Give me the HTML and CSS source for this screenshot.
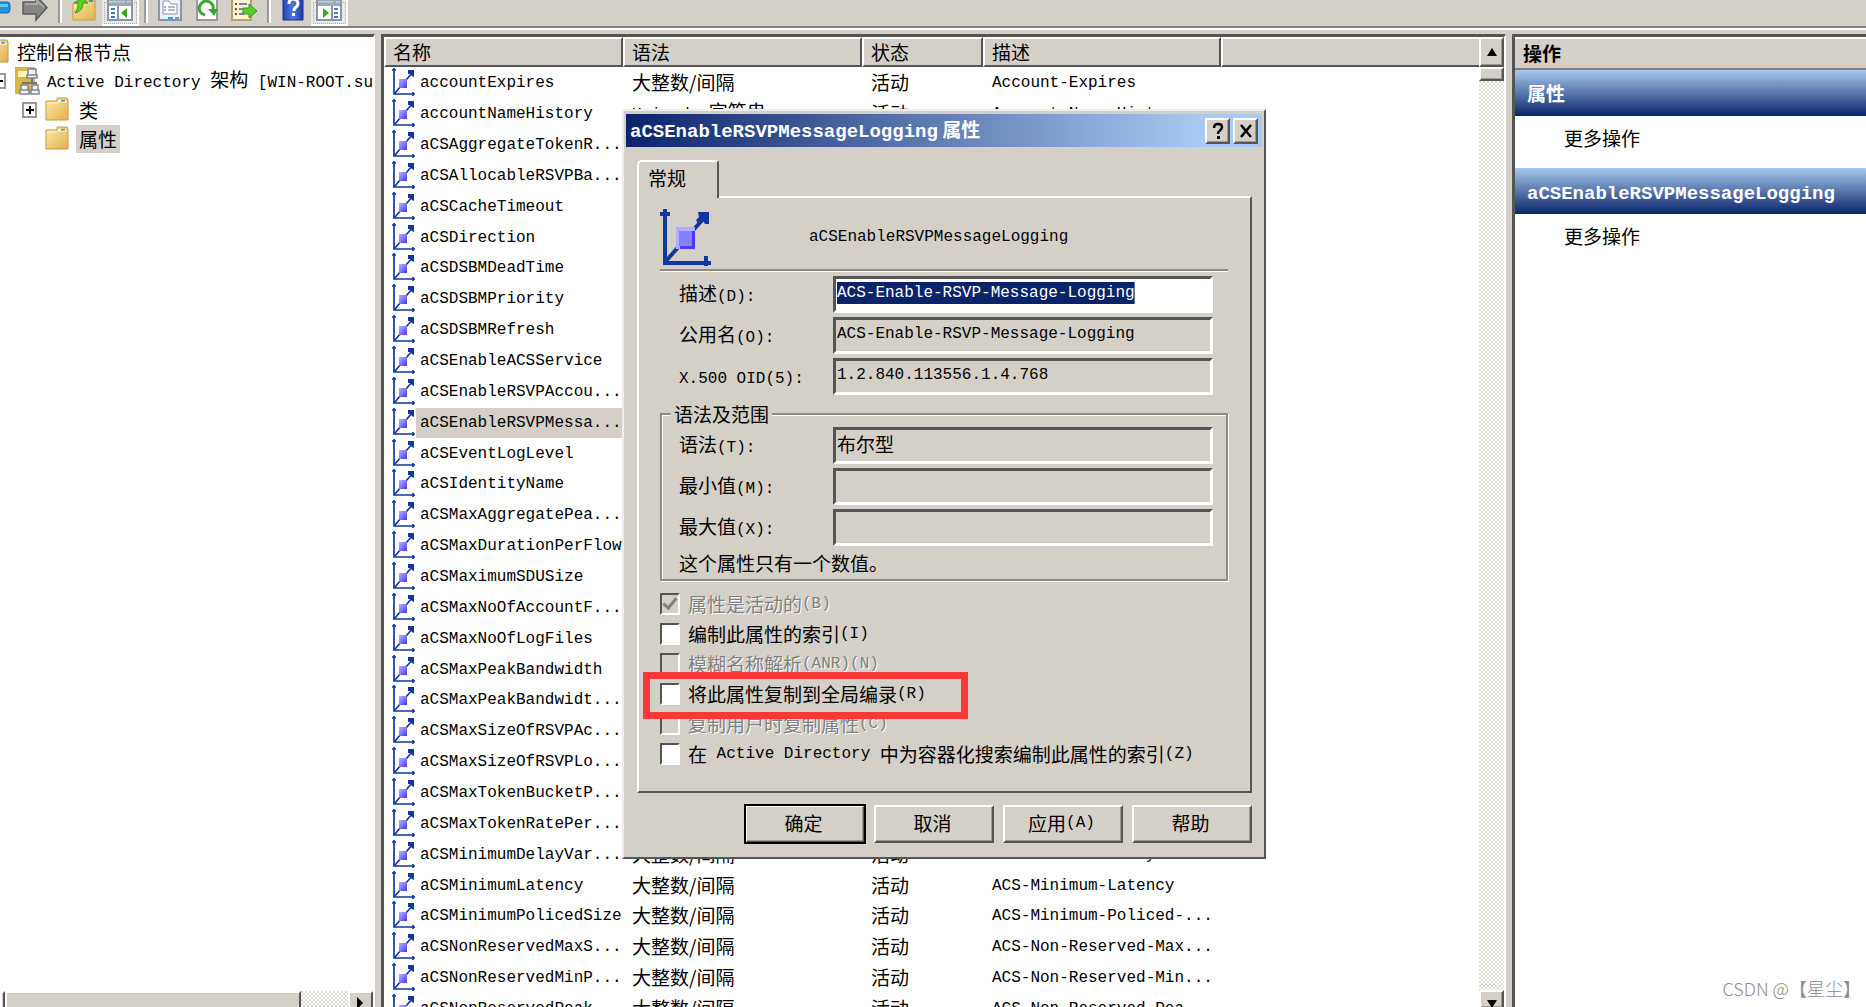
FILE: index.html
```html
<!DOCTYPE html>
<html lang="zh-CN">
<head>
<meta charset="utf-8">
<title>控制台根节点</title>
<link rel="stylesheet" href="styles.css">
</head>
<body>
<svg class="defs" aria-hidden="true">
  <defs>
    <linearGradient id="gold" x1="0" y1="0" x2="1" y2="1"><stop offset="0" stop-color="#fdeaa6"/><stop offset="1" stop-color="#e2b04e"/></linearGradient>
    <linearGradient id="blue" x1="0" y1="0" x2="1" y2="0"><stop offset="0" stop-color="#2346b8"/><stop offset=".5" stop-color="#4e78dc"/><stop offset="1" stop-color="#1c3aa6"/></linearGradient>
    <linearGradient id="cube" x1="0" y1="0" x2="1" y2="1"><stop offset="0" stop-color="#b4acff"/><stop offset=".5" stop-color="#7d78ff"/><stop offset="1" stop-color="#4030f0"/></linearGradient>
    <symbol id="attr" viewBox="0 0 25 29">
      <path d="M3 0v26h21M4 25 21 5M1 2h4M22 24v4" fill="none" stroke="#1238a0" stroke-width="1.700"/>
      <path d="M17 2h6v7l-2-1-2-2h-2z" fill="#1238a0"/>
      <path d="M8 11h8v9H8z" fill="url(#cube)"/>
    </symbol>
    <symbol id="folder" viewBox="0 0 24 25">
      <path d="M1 4h11V1h10l1 2v20H1z" fill="url(#gold)" stroke="#c79a45"/>
      <path d="M13 3h8v2h-8z" fill="#fff"/><path d="M16 3h4v2h-4z" fill="#4d90d8"/>
      <path d="M2 6h11l2-1h7" fill="none" stroke="#fff3c8"/>
    </symbol>
  </defs>
</svg>

<div class="console">
  <div class="toolbar" role="toolbar">
    <button class="tool" aria-label="后退"><svg viewBox="0 0 26 22"><path d="M8 2h14q3 0 3 3v5q0 3-3 3H8z" fill="#1f90e0" stroke="#1467b4"/><path d="M10 4h13v3H10z" fill="#6cc4fa"/></svg></button>
    <button class="tool" aria-label="前进"><svg viewBox="0 0 26 22"><path d="M1 2h13V-4L25 7.500 14 20v-6H1z" fill="#858585" stroke="#5c5c5c" stroke-width="1.500"/><path d="M3 4h12V1l7 6" fill="none" stroke="#aaa" stroke-width="2"/></svg></button>
    <span class="sep"></span>
    <button class="tool" aria-label="上一级"><svg viewBox="0 0 26 22"><path d="M2 3h11V0h11v20H2z" fill="url(#gold)" stroke="#c79a45"/><path d="M18 0h4v2h-4z" fill="#4d90d8"/><path d="M4 13Q12 11 12 3h5L11-2 3 3h4Q8 8 4 13z" fill="#52d420" stroke="#3a9a1a"/></svg></button>
    <button class="tool pressed" aria-label="显示控制台树"><svg viewBox="0 0 26 22"><path d="M1-2h24v22H1z" fill="#fff" stroke="#8a95a5" stroke-width="2"/><path d="M2-1h22v7H2z" fill="#9aa8ba"/><path d="M2 2h16M20 2h4" stroke="#e8edf4"/><path d="M11 6v14" stroke="#8a95a5" stroke-width="2"/><path d="M4 9h4M4 13h4M4 17h4" stroke="#3c7cc8" stroke-width="2"/><path d="M20 8v10l-6-5z" fill="#38a818"/></svg></button>
    <span class="sep"></span>
    <button class="tool" aria-label="属性"><svg viewBox="0 0 26 22"><path d="M2-2h22v22H2z" fill="#edf2f8" stroke="#8795a8" stroke-width="2"/><path d="M6 4V1h6l2 3h6v10H6z" fill="#fff" stroke="#8795a8"/><path d="M7 7h2M7 10h2" stroke="#2a6cc0"/><path d="M11 7h7M11 10h7" stroke="#777"/><path d="M11 18h5" stroke="#16a8f0" stroke-width="2"/><path d="M18 18h4" stroke="#8795a8" stroke-width="2"/></svg></button>
    <button class="tool" aria-label="刷新"><svg viewBox="0 0 26 22"><path d="M3-2h20v22H3z" fill="#fff" stroke="#9a9a9a" stroke-width="2"/><path d="M11 15A7 7 0 1 1 19 10" fill="none" stroke="#38a832" stroke-width="3"/><path d="M14 9h10l-4 7z" fill="#38a832"/></svg></button>
    <button class="tool" aria-label="导出列表"><svg viewBox="0 0 26 22"><path d="M1-2h19v22H1z" fill="#fdf4cc" stroke="#b3a26c" stroke-width="2"/><path d="M4 4h2M4 9h2M4 14h2" stroke="#555" stroke-width="2"/><path d="M8 4h8M8 9h5M8 14h5" stroke="#8c7ca8" stroke-width="2"/><path d="M12 8h6V4l8 7-8 7v-4h-6z" fill="#58cc30" stroke="#3a9a1a"/></svg></button>
    <span class="sep"></span>
    <button class="tool" aria-label="帮助"><svg viewBox="0 0 26 22"><path d="M3-2h20v22H3z" fill="url(#blue)" stroke="#16308c"/><path d="M9 4Q9-1 13-1t5 4q0 3-3 5-1 1-1 3" fill="none" stroke="#fff" stroke-width="3"/><path d="M12 13h3v3h-3z" fill="#fff"/></svg></button>
    <button class="tool pressed" aria-label="显示操作窗格"><svg viewBox="0 0 26 22"><path d="M1-2h24v22H1z" fill="#fff" stroke="#8a95a5" stroke-width="2"/><path d="M2-1h22v7H2z" fill="#9aa8ba"/><path d="M2 2h16M20 2h4" stroke="#e8edf4"/><path d="M16 6v14" stroke="#8a95a5" stroke-width="2"/><path d="M18 9h4M18 13h4M18 17h4" stroke="#3c7cc8" stroke-width="2"/><path d="M7 8v10l6-5z" fill="#38a818"/></svg></button>
  </div>

  <main class="panes">
    <nav class="tree">
      <ul class="nodes">
        <li class="node root"><svg class="folder"><use href="#folder"/></svg><span>控制台根节点</span></li>
        <li class="node domain"><span class="toggle minus"></span>
          <svg class="schema" viewBox="0 0 26 30"><path d="M1 1h20v27H1z" fill="#d8b83c"/><path d="M4 5h10v6H4z" fill="#fdf6c0"/><path d="M18 10v6M9 21v-4h13v4" fill="none" stroke="#777" stroke-width="2"/><g fill="#eef1f6" stroke="#7f8794" stroke-width="1.500"><path d="M14 3h8v6h-8zM13 9h10v3H13zM7 19h7v5H7zM6 24h9v4H6zM18 19h6v5h-6zM17 24h8v4h-8z"/></g></svg>
          <span><span class="en">Active Directory </span>架构<span class="en"> [WIN-ROOT.su</span></span></li>
        <li class="node child"><span class="toggle plus"></span><svg class="folder"><use href="#folder"/></svg><span>类</span></li>
        <li class="node child"><span class="toggle none"></span><svg class="folder"><use href="#folder"/></svg><span class="current">属性</span></li>
      </ul>
      <div class="hscroll"><span class="raised stub"></span><span class="raised hthumb"></span><span class="track"></span><span class="raised hend"><svg viewBox="0 0 8 14"><path d="M0 0l7 7-7 7z"/></svg></span></div>
    </nav>

    <section class="list">
      <div class="rows">
        <table>
          <colgroup><col class="c-name"><col class="c-syntax"><col class="c-state"><col class="c-desc"><col></colgroup>
          <thead><tr><th>名称</th><th>语法</th><th>状态</th><th>描述</th><th></th></tr></thead>
          <tbody>
            <tr><td><div class="item"><svg><use href="#attr"/></svg><span>accountExpires</span></div></td><td>大整数/间隔</td><td>活动</td><td class="en">Account-Expires</td><td></td></tr>
            <tr><td><div class="item"><svg><use href="#attr"/></svg><span>accountNameHistory</span></div></td><td><span class="en">Unicode </span>字符串</td><td>活动</td><td class="en">Account-Name-Hist...</td><td></td></tr>
            <tr><td><div class="item"><svg><use href="#attr"/></svg><span>aCSAggregateTokenR...</span></div></td><td></td><td></td><td></td><td></td></tr>
            <tr><td><div class="item"><svg><use href="#attr"/></svg><span>aCSAllocableRSVPBa...</span></div></td><td></td><td></td><td></td><td></td></tr>
            <tr><td><div class="item"><svg><use href="#attr"/></svg><span>aCSCacheTimeout</span></div></td><td></td><td></td><td></td><td></td></tr>
            <tr><td><div class="item"><svg><use href="#attr"/></svg><span>aCSDirection</span></div></td><td></td><td></td><td></td><td></td></tr>
            <tr><td><div class="item"><svg><use href="#attr"/></svg><span>aCSDSBMDeadTime</span></div></td><td></td><td></td><td></td><td></td></tr>
            <tr><td><div class="item"><svg><use href="#attr"/></svg><span>aCSDSBMPriority</span></div></td><td></td><td></td><td></td><td></td></tr>
            <tr><td><div class="item"><svg><use href="#attr"/></svg><span>aCSDSBMRefresh</span></div></td><td></td><td></td><td></td><td></td></tr>
            <tr><td><div class="item"><svg><use href="#attr"/></svg><span>aCSEnableACSService</span></div></td><td></td><td></td><td></td><td></td></tr>
            <tr><td><div class="item"><svg><use href="#attr"/></svg><span>aCSEnableRSVPAccou...</span></div></td><td></td><td></td><td></td><td></td></tr>
            <tr class="selected"><td><div class="item"><svg><use href="#attr"/></svg><span>aCSEnableRSVPMessa...</span></div></td><td></td><td></td><td></td><td></td></tr>
            <tr><td><div class="item"><svg><use href="#attr"/></svg><span>aCSEventLogLevel</span></div></td><td></td><td></td><td></td><td></td></tr>
            <tr><td><div class="item"><svg><use href="#attr"/></svg><span>aCSIdentityName</span></div></td><td></td><td></td><td></td><td></td></tr>
            <tr><td><div class="item"><svg><use href="#attr"/></svg><span>aCSMaxAggregatePea...</span></div></td><td></td><td></td><td></td><td></td></tr>
            <tr><td><div class="item"><svg><use href="#attr"/></svg><span>aCSMaxDurationPerFlow</span></div></td><td></td><td></td><td></td><td></td></tr>
            <tr><td><div class="item"><svg><use href="#attr"/></svg><span>aCSMaximumSDUSize</span></div></td><td></td><td></td><td></td><td></td></tr>
            <tr><td><div class="item"><svg><use href="#attr"/></svg><span>aCSMaxNoOfAccountF...</span></div></td><td></td><td></td><td></td><td></td></tr>
            <tr><td><div class="item"><svg><use href="#attr"/></svg><span>aCSMaxNoOfLogFiles</span></div></td><td></td><td></td><td></td><td></td></tr>
            <tr><td><div class="item"><svg><use href="#attr"/></svg><span>aCSMaxPeakBandwidth</span></div></td><td></td><td></td><td></td><td></td></tr>
            <tr><td><div class="item"><svg><use href="#attr"/></svg><span>aCSMaxPeakBandwidt...</span></div></td><td></td><td></td><td></td><td></td></tr>
            <tr><td><div class="item"><svg><use href="#attr"/></svg><span>aCSMaxSizeOfRSVPAc...</span></div></td><td></td><td></td><td></td><td></td></tr>
            <tr><td><div class="item"><svg><use href="#attr"/></svg><span>aCSMaxSizeOfRSVPLo...</span></div></td><td></td><td></td><td></td><td></td></tr>
            <tr><td><div class="item"><svg><use href="#attr"/></svg><span>aCSMaxTokenBucketP...</span></div></td><td></td><td></td><td></td><td></td></tr>
            <tr><td><div class="item"><svg><use href="#attr"/></svg><span>aCSMaxTokenRatePer...</span></div></td><td></td><td></td><td></td><td></td></tr>
            <tr><td><div class="item"><svg><use href="#attr"/></svg><span>aCSMinimumDelayVar...</span></div></td><td>大整数/间隔</td><td>活动</td><td class="en">ACS-Minimum-Delay-Va...</td><td></td></tr>
            <tr><td><div class="item"><svg><use href="#attr"/></svg><span>aCSMinimumLatency</span></div></td><td>大整数/间隔</td><td>活动</td><td class="en">ACS-Minimum-Latency</td><td></td></tr>
            <tr><td><div class="item"><svg><use href="#attr"/></svg><span>aCSMinimumPolicedSize</span></div></td><td>大整数/间隔</td><td>活动</td><td class="en">ACS-Minimum-Policed-...</td><td></td></tr>
            <tr><td><div class="item"><svg><use href="#attr"/></svg><span>aCSNonReservedMaxS...</span></div></td><td>大整数/间隔</td><td>活动</td><td class="en">ACS-Non-Reserved-Max...</td><td></td></tr>
            <tr><td><div class="item"><svg><use href="#attr"/></svg><span>aCSNonReservedMinP...</span></div></td><td>大整数/间隔</td><td>活动</td><td class="en">ACS-Non-Reserved-Min...</td><td></td></tr>
            <tr><td><div class="item"><svg><use href="#attr"/></svg><span>aCSNonReservedPeak...</span></div></td><td>大整数/间隔</td><td>活动</td><td class="en">ACS-Non-Reserved-Pea...</td><td></td></tr>
          </tbody>
        </table>
      </div>
      <div class="vscroll">
        <span class="raised vbtn"><svg viewBox="0 0 10 8"><path d="M5 0l5 8H0z"/></svg></span>
        <span class="raised vthumb"></span>
        <span class="track"></span>
        <span class="raised vend"><svg viewBox="0 0 10 8"><path d="M0 0h10L5 8z"/></svg></span>
      </div>
    </section>

    <aside class="actions">
      <h2 class="actions-head">操作</h2>
      <h3 class="bar">属性</h3>
      <a class="more" href="#">更多操作</a>
      <h3 class="bar"><span class="en">aCSEnableRSVPMessageLogging</span></h3>
      <a class="more" href="#">更多操作</a>
    </aside>
  </main>
</div>

<div class="dialog" role="dialog" aria-labelledby="caption">
  <div class="caption">
    <h1 id="caption"><span class="en">aCSEnableRSVPMessageLogging</span> 属性</h1>
    <button class="raised cap" aria-label="帮助"><svg viewBox="0 0 16 18"><path d="M4 6q0-4 4-4t4 3q0 2-2 3.500-2 1-2 3.500" fill="none" stroke="#000" stroke-width="2.500"/><path d="M7 14h3v3H7z"/></svg></button>
    <button class="raised cap" aria-label="关闭"><svg viewBox="0 0 16 18"><path d="M3 3l10 12M13 3 3 15" fill="none" stroke="#000" stroke-width="2.500"/></svg></button>
  </div>
  <form class="body">
    <div class="tabs"><button type="button" class="tab">常规</button></div>
    <div class="panel">
      <div class="subject">
        <svg viewBox="0 0 51 58"><path d="M5 1v54h46M6 53 44 10M0 6h10M46 48v10" fill="none" stroke="#1238a0" stroke-width="4"/><path d="M38 4h11v12h-4l-2-3-5 3-2-4 3-3z" fill="#1238a0"/><path d="M16 19h19v22H16z" fill="#4a3cff"/><path d="M16 19h19v4H20v18h-4z" fill="#b4acff"/><path d="M19 23h13v15H19z" fill="#8680ff"/></svg>
        <span class="en">aCSEnableRSVPMessageLogging</span>
      </div>
      <div class="fields top">
        <label for="desc">描述<span class="en">(D):</span></label><input id="desc" class="marked" value="ACS-Enable-RSVP-Message-Logging">
        <label for="cn">公用名<span class="en">(O):</span></label><input id="cn" readonly value="ACS-Enable-RSVP-Message-Logging">
        <label for="oid"><span class="en">X.500 OID(5):</span></label><input id="oid" readonly value="1.2.840.113556.1.4.768">
      </div>
      <fieldset>
        <legend>语法及范围</legend>
        <div class="fields">
          <label for="syn">语法<span class="en">(T):</span></label><input id="syn" class="zh" readonly value="布尔型">
          <label for="min">最小值<span class="en">(M):</span></label><input id="min" readonly>
          <label for="max">最大值<span class="en">(X):</span></label><input id="max" readonly>
        </div>
        <p class="note">这个属性只有一个数值。</p>
      </fieldset>
      <div class="checks">
        <label class="check off"><input type="checkbox" checked disabled>属性是活动的<span class="en">(B)</span></label>
        <label class="check"><input type="checkbox">编制此属性的索引<span class="en">(I)</span></label>
        <label class="check off"><input type="checkbox" disabled>模糊名称解析<span class="en">(ANR)(N)</span></label>
        <label class="check boxed"><input type="checkbox">将此属性复制到全局编录<span class="en">(R)</span></label>
        <label class="check off"><input type="checkbox" disabled>复制用户时复制属性<span class="en">(C)</span></label>
        <label class="check"><input type="checkbox">在<span class="en"> Active Directory </span>中为容器化搜索编制此属性的索引<span class="en">(Z)</span></label>
      </div>
    </div>
    <div class="buttons">
      <button type="button" class="raised push default">确定</button>
      <button type="button" class="raised push">取消</button>
      <button type="button" class="raised push">应用<span class="en">(A)</span></button>
      <button type="button" class="raised push">帮助</button>
    </div>
  </form>
</div>
<div class="credit">CSDN @【星尘】</div>
</body>
</html>
```

FILE: styles.css
```css
:root {
  --face: #d4d0c8;
  --dark: #555;
  --shade: #808080;
  --navy: #0a246a;
  --sky: #a6caf0;
  --zh: "Noto Sans CJK SC", sans-serif;
  --en: "Liberation Mono", "Noto Sans CJK SC", monospace;
}

*, *::before, *::after { box-sizing: border-box; }

body {
  margin: 0;
  height: 100vh;
  overflow: hidden;
  position: relative;
  background: var(--face);
  color: #000;
  font: 19px/24px var(--zh);
}

button, input { font: inherit; color: inherit; }
h1, h2, h3, p, ul { margin: 0; padding: 0; font-size: inherit; }
.defs { position: absolute; width: 0; height: 0; }
.en { font-family: var(--en); font-size: 16px; white-space: pre; }

.raised {
  display: flex;
  align-items: center;
  justify-content: center;
  background: var(--face);
  border: 2px solid;
  border-color: #fff var(--dark) var(--dark) #fff;
  box-shadow: inset -1px -1px #9c9890;
}

.console { height: 100%; display: flex; flex-direction: column; }

/* toolbar */
.toolbar {
  display: flex;
  flex: none;
  height: 28px;
  margin-left: -21px;
  border-bottom: 2px solid var(--shade);
  box-shadow: 0 2px #fff;
}
.tool {
  width: 37px;
  height: 26px;
  padding: 0;
  border: 0;
  background: none;
  display: flex;
  justify-content: center;
}
.tool svg { width: 26px; height: 22px; }
.pressed {
  background: #eceae6;
  border: solid #fff;
  border-width: 0 2px 2px 0;
  outline: 1px dotted #aaa;
  outline-offset: -3px;
}
.sep { width: 12px; height: 23px; padding-left: 5px; }
.sep::before { content: ""; display: block; width: 4px; height: 100%; background: #fff; border-left: 2px solid #999; }

/* panes */
.panes {
  flex: 1;
  min-height: 0;
  margin-top: 6px;
  display: grid;
  grid-template-columns: 375px minmax(0, 1fr) 354px;
  grid-template-rows: minmax(0, 1fr);
  gap: 6px;
}
.tree, .list, .actions { background: #fff; border-top: 3px solid var(--dark); overflow: hidden; }
.tree { display: flex; flex-direction: column; border-right: 2px solid #fff; }
.nodes { flex: 1; list-style: none; }
.node { display: flex; align-items: center; height: 29px; white-space: nowrap; }
.root { margin-left: -15px; }
.root .folder { margin-right: 8px; }
.domain { margin-left: -9px; }
.schema { flex: none; width: 26px; height: 30px; margin: 0 7px 0 8px; }
.child { padding-left: 22px; }
.folder { flex: none; width: 24px; height: 25px; }
.child .folder { margin: 0 7px 0 8px; }
.child > span:last-child { padding: 0 3px; height: 28px; line-height: 28px; }
.current { background: var(--face); }
.toggle { flex: none; width: 15px; height: 16px; border: 2px solid #999; display: grid; place-items: center; }
.toggle.none { border-color: transparent; }
.minus, .plus { background: linear-gradient(#000, #000) center / 8px 2px no-repeat; }
.plus { background: linear-gradient(#000, #000) center / 8px 2px no-repeat, linear-gradient(#000, #000) center / 2px 8px no-repeat; }

.track { flex: 1; background: repeating-conic-gradient(#fff 0 25%, #dedbd4 0 50%) 0 0 / 4px 4px; }
.hscroll { display: flex; height: 16px; overflow: hidden; }
.hscroll .raised { border-bottom: 0; box-shadow: none; }
.stub { width: 5px; }
.hthumb { width: 296px; }
.hend { width: 25px; }
.hend svg { width: 7px; height: 14px; margin-top: 6px; }

/* attribute list */
.list { display: flex; border-left: 3px solid var(--dark); border-right: 2px solid #fff; }
.rows { flex: 1; min-width: 0; overflow: hidden; }
table { width: 100%; table-layout: fixed; border-collapse: separate; border-spacing: 0; }
.c-name, .c-syntax { width: 239px; }
.c-state { width: 121px; }
.c-desc { width: 238px; }
th {
  height: 30px;
  padding: 0 7px;
  text-align: left;
  font-weight: 400;
  background: var(--face);
  border: 2px solid;
  border-color: #fff var(--dark) var(--dark) #fff;
}
th:last-child { border-right: 0; }
td { height: 31px; padding: 0 0 2px 9px; white-space: nowrap; overflow: hidden; }
td.en { padding-bottom: 0; }
td:first-child { padding: 0 0 0 7px; }
tr:nth-child(7n) td { height: 30px; }
.item { display: flex; height: 30px; overflow: hidden; font: 16px/30px var(--en); }
.item svg { flex: none; width: 25px; height: 29px; }
.item span { flex: 1; padding-left: 4px; }
.selected .item span { background: var(--face); }

.vscroll { width: 25px; display: flex; flex-direction: column; }
.vscroll svg { width: 12px; height: 8px; }
.vbtn { height: 30px; }
.vthumb { height: 14px; }
.vend { height: 17px; border-bottom: 0; }
.vend svg { margin-top: 8px; }

/* actions */
.actions { border-left: 3px solid var(--dark); }
.actions-head {
  height: 33px;
  padding-left: 8px;
  line-height: 28px;
  background: var(--face);
  border-top: 2px solid #fff;
  border-bottom: 2px solid var(--shade);
}
.bar {
  height: 46px;
  padding-left: 12px;
  line-height: 46px;
  color: #fff;
  background: linear-gradient(var(--sky), var(--navy));
}
.bar .en, .caption .en { font-size: 19px; }
.more {
  display: block;
  height: 52px;
  padding-left: 49px;
  line-height: 44px;
  color: #000;
  text-decoration: none;
}

/* property sheet */
.dialog {
  position: absolute;
  left: 622px;
  top: 109px;
  width: 644px;
  padding: 3px 2px 2px;
  background: var(--face);
  border: 2px solid;
  border-color: #f0eee8 var(--dark) var(--dark) #f0eee8;
}
.caption {
  height: 33px;
  padding: 0 4px;
  display: flex;
  align-items: center;
  gap: 3px;
  color: #fff;
  background: linear-gradient(90deg, var(--navy), var(--sky) 90%);
}
.caption h1 { flex: 1; line-height: 33px; white-space: nowrap; }
.cap { width: 25px; height: 26px; padding: 0; }
.cap svg { flex: none; width: 16px; height: 18px; }

.body { padding: 13px 10px 12px 11px; }
.tab {
  display: block;
  position: relative;
  width: 82px;
  height: 38px;
  padding: 0 0 4px 9px;
  margin-bottom: -2px;
  text-align: left;
  background: var(--face);
  border: 2px solid;
  border-color: #fff var(--dark) transparent #fff;
  border-bottom: 0;
  border-radius: 5px 3px 0 0;
}
.panel {
  padding: 10px 22px 21px 21px;
  border: 2px solid;
  border-color: #fff var(--dark) var(--dark) #fff;
}
.subject {
  display: flex;
  align-items: center;
  gap: 98px;
  height: 63px;
  padding-bottom: 3px;
  border-bottom: 2px solid #8c8c8c;
  box-shadow: 0 1px #fff;
}
.subject svg { width: 51px; height: 58px; }
.fields {
  display: grid;
  grid-template-columns: 154px minmax(0, 1fr);
  row-gap: 4px;
  align-items: center;
  padding: 2px 13px 0 17px;
}
.fields.top { padding: 5px 15px 0 19px; }
.fields input {
  width: 100%;
  height: 37px;
  padding: 0 1px 3px;
  font: 16px/24px var(--en);
  background: var(--face);
  border: 3px solid;
  border-color: var(--dark) #fff #fff var(--dark);
  outline: 0;
}
.fields input.zh { padding-bottom: 5px; font: 19px/24px var(--zh); }
.fields input.marked {
  color: #fff;
  background: linear-gradient(var(--navy), var(--navy)) 1px 3px / 31ch 22px no-repeat #fff;
}
fieldset {
  min-width: 0;
  margin: 8px 0 0;
  padding: 0 0 3px;
  border: 2px solid #8c8c8c;
  box-shadow: 1px 1px #fff, inset 1px 1px #fff;
}
legend { height: 22px; line-height: 22px; margin-left: 9px; padding: 0 3px; background: var(--face); }
.note { margin: 5px 0 1px 17px; }
.checks { margin-top: 8px; padding-bottom: 1px; }
.check { display: flex; align-items: center; height: 30px; position: relative; white-space: pre; }
.check input {
  appearance: none;
  flex: none;
  width: 20px;
  height: 22px;
  margin: 0 8px 0 0;
  background: #fff;
  border: 2px solid;
  border-color: var(--dark) #fff #fff var(--dark);
}
.off { color: var(--shade); text-shadow: 1px 1px #fff; }
.check input:disabled { background: var(--face); }
.check input:checked::before {
  content: "";
  display: block;
  width: 8px;
  height: 14px;
  margin: 0 0 0 4px;
  border: solid var(--shade);
  border-width: 0 3px 3px 0;
  transform: rotate(40deg);
}
.boxed::after {
  content: "";
  position: absolute;
  z-index: 1;
  left: -17px;
  top: -7px;
  width: 325px;
  height: 47px;
  border: 7px solid #fb3838;
}
.buttons { display: flex; justify-content: flex-end; gap: 9px; margin-top: 12px; }
.push { width: 120px; height: 38px; padding: 0 3px 2px 0; }
.default { outline: 2px solid #000; outline-offset: -1px; }

.credit { position: absolute; right: 5px; bottom: 7px; color: #8c8c8c; font: 300 18px/24px var(--zh); }
```
